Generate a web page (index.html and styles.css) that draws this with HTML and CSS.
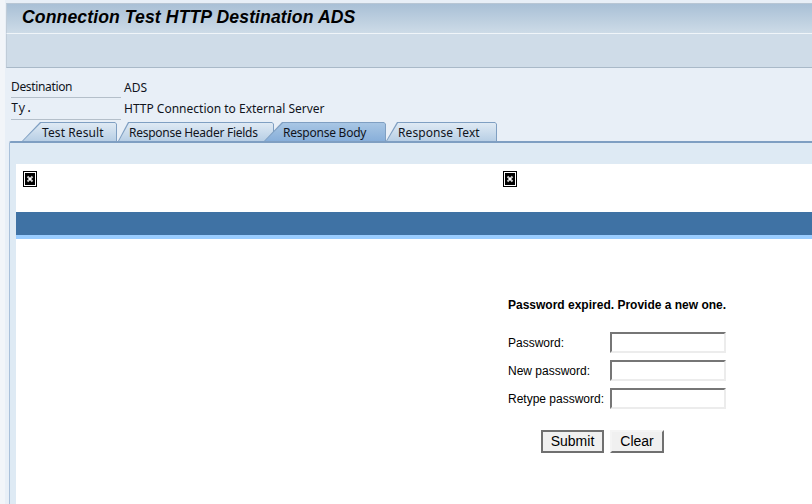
FILE: index.html
```html
<!DOCTYPE html>
<html lang="en">
<head>
<meta charset="utf-8">
<title>Connection Test HTTP Destination ADS</title>
<link rel="stylesheet" href="styles.css">
</head>
<body>
<div class="shell">
  <header class="titlebar"><h1>Connection Test HTTP Destination ADS</h1></header>
  <div class="toolbar"></div>
  <section class="fields">
    <div class="field"><span class="label dest">Destination</span><span class="value">ADS</span></div>
    <div class="field"><span class="label mono">Ty.</span><span class="value">HTTP Connection to External Server</span></div>
  </section>
  <nav class="tabs">
    <div class="tab first"><span>Test Result</span></div>
    <div class="tab second"><span>Response Header Fields</span></div>
    <div class="tab active"><span>Response Body</span></div>
    <div class="tab last"><span>Response Text</span></div>
  </nav>
  <main class="panel">
    <div class="page">
      <div class="logos">
        <svg class="broken" viewBox="0 0 14 16" width="14" height="16"><rect x="0.5" y="0.5" width="13" height="15" fill="#fff" stroke="#000"/><rect x="2" y="2" width="10" height="12" fill="#000"/><path d="M4.5 5.5l5 5M9.5 5.5l-5 5" stroke="#ccc" stroke-width="2"/><rect x="6" y="7" width="2" height="2" fill="#fff"/></svg>
        <svg class="broken second-logo" viewBox="0 0 14 16" width="14" height="16"><rect x="0.5" y="0.5" width="13" height="15" fill="#fff" stroke="#000"/><rect x="2" y="2" width="10" height="12" fill="#000"/><path d="M4.5 5.5l5 5M9.5 5.5l-5 5" stroke="#ccc" stroke-width="2"/><rect x="6" y="7" width="2" height="2" fill="#fff"/></svg>
      </div>
      <div class="band"></div>
      <form class="login">
        <p class="message">Password expired. Provide a new one.</p>
        <div class="row"><label>Password:</label><input type="password"></div>
        <div class="row"><label>New password:</label><input type="password"></div>
        <div class="row"><label>Retype password:</label><input type="password"></div>
        <div class="buttons">
          <button type="button" class="btn default">Submit</button>
          <button type="button" class="btn">Clear</button>
        </div>
      </form>
    </div>
  </main>
</div>
</body>
</html>
```
FILE: styles.css
```css
* { box-sizing: border-box; }
html, body { margin: 0; height: 100%; overflow: hidden; }
body { background: #e8eff7; font-family: "Noto Sans", sans-serif; color: #10141c; }
.shell { height: 504px; display: flex; flex-direction: column; padding: 3px 0 0 6px; background: linear-gradient(to right, #f2f5f9 5px, #e8eff7 5px); }
.titlebar { height: 31px; background: linear-gradient(#a9c0d6, #cddbe7); padding: 0 0 3px 15px; border-bottom: 1px solid #f0f5f9; display: flex; align-items: center; border-left: 1px solid #c0ccd8; border-top: 1px solid #b8c6d4; flex: none; }
.titlebar h1 { margin: 0; font: italic bold 17.6px "Liberation Sans", sans-serif; letter-spacing: 0.11px; color: #000; white-space: nowrap; }
.toolbar { height: 34px; background: #cfdce8; border-bottom: 1px solid #a9b9c8; border-left: 1px solid #c0ccd8; flex: none; }
.fields { padding: 8px 0 0 5px; flex: none; }
.field { display: flex; height: 22px; align-items: center; font-size: 12px; }
.field + .field .value { margin-bottom: 2px; }
.label { width: 110px; height: 22px; line-height: 22px; border-bottom: 1px solid #b4bfca; flex: none; margin-right: 3px; }
.dest { letter-spacing: -0.35px; }
.mono { font-family: "Liberation Mono", monospace; }
.tabs { display: flex; height: 19px; margin-top: 2px; padding-left: 16px; flex: none; }
.tab { position: relative; height: 19px; font-size: 12px; line-height: 22px; background: #7f9fc2; clip-path: polygon(var(--s) 0, calc(100% - 2px) 0, 100% 2px, 100% 100%, 0 100%); }
.tab::before { content: ""; position: absolute; inset: 1px 1px 0 1px; background: linear-gradient(#dfeaf4, #b8cfe5); clip-path: polygon(var(--s) 0, calc(100% - 1px) 0, 100% 1px, 100% 100%, 0 100%); }
.tab span { position: relative; display: block; white-space: nowrap; }
.first { --s: 18px; width: 95px; padding-left: 20px; }
.first span { letter-spacing: 0.1px; }
.second { --s: 10px; width: 156px; padding-left: 11px; margin-left: 1px; }
.second span { letter-spacing: -0.27px; }
.active { --s: 18px; width: 122px; padding-left: 19px; margin-left: -10px; }
.active span { letter-spacing: -0.23px; }
.active::before { background: linear-gradient(#a8c6e4, #88afda); }
.last { --s: 11px; width: 111px; padding-left: 12px; }
.last span { letter-spacing: 0.08px; }
.panel { flex: 1; margin-left: 3px; padding: 21px 0 0 6px; background: #deeaf4; border-top: 2px solid #7f9fc2; border-left: 1px solid #a9c0da; border-top-left-radius: 2px; min-height: 0; }
.page { height: 100%; background: #fff; }
.logos { height: 48px; padding: 7px 0 0 7px; display: flex; align-items: flex-start; }
.broken { display: block; flex: none; }
.second-logo { margin-left: 466px; }
.band { height: 27px; background: #3f72a4; border-bottom: 4px solid #99ccff; }
.login { margin: 0 0 0 492px; padding-top: 59px; font: 12px "Liberation Sans", sans-serif; color: #000; }
.message { margin: 0 0 20px; font-weight: bold; line-height: 14px; }
.row { display: flex; align-items: center; height: 21px; margin-bottom: 7px; }
.row label { width: 102px; flex: none; }
.row input { width: 116px; height: 21px; padding: 0; background: #fff; border: 2px solid; border-color: #767676 #ececec #ececec #767676; }
.buttons { display: flex; gap: 6px; margin: 21px 0 0 33px; }
.btn { height: 23px; padding: 0 0 2px; font: 14px "Liberation Sans", sans-serif; background: #f0f0f0; border: 2px solid; border-color: #f4f4f4 #707070 #707070 #f4f4f4; color: #000; }
.default { width: 63px; border-color: #707070; }
.btn:not(.default) { width: 54px; }
```
